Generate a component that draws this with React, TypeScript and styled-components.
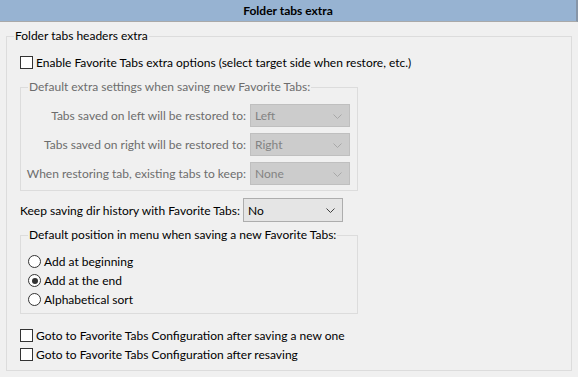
import React from 'react'
import styled, { createGlobalStyle } from 'styled-components'

const GlobalStyle = createGlobalStyle`
	html, body {
		margin: 0;
		padding: 0;
		background: #f0f0f0;
	}
	body {
		font-family: Lato, 'Noto Sans', sans-serif;
		font-size: 12px;
		color: #000;
	}
`

const restoreRows = [
	{ label: 'Tabs saved on left will be restored to:', value: 'Left' },
	{ label: 'Tabs saved on right will be restored to:', value: 'Right' },
	{ label: 'When restoring tab, existing tabs to keep:', value: 'None' },
]

const positions = [
	{ label: 'Add at beginning', checked: false },
	{ label: 'Add at the end', checked: true },
	{ label: 'Alphabetical sort', checked: false },
]

function Chevron({ disabled }: { disabled?: boolean }) {
	return (
		<ChevronBox>
			<svg width='9' height='5' viewBox='0 0 9 5'>
				<polyline points='0.5,0.5 4.5,4.5 8.5,0.5' fill='none' stroke={disabled ? '#a8a8a8' : '#404040'} strokeWidth='1' />
			</svg>
		</ChevronBox>
	)
}

export default function App() {
	return (
		<Main>
			<GlobalStyle />
			<Header>Folder tabs extra</Header>
			<Outer>
				<Legend>Folder tabs headers extra</Legend>
				<CheckRow $top={9}>
					<CheckBox />
					<span>Enable Favorite Tabs extra options (select target side when restore, etc.)</span>
				</CheckRow>
				<Group $disabled $top={7}>
					<Legend $disabled>Default extra settings when saving new Favorite Tabs:</Legend>
					<RestoreGrid>
						{restoreRows.map(row => (
							<React.Fragment key={row.label}>
								<RowLabel>{row.label}</RowLabel>
								<Combo $disabled>
									{row.value}
									<Chevron disabled />
								</Combo>
							</React.Fragment>
						))}
					</RestoreGrid>
				</Group>
				<KeepRow>
					<span>Keep saving dir history with Favorite Tabs:</span>
					<Combo>
						No
						<Chevron />
					</Combo>
				</KeepRow>
				<Group $top={5}>
					<Legend>Default position in menu when saving a new Favorite Tabs:</Legend>
					<RadioList>
						{positions.map(p => (
							<RadioRow key={p.label}>
								<Radio $checked={p.checked} />
								<span>{p.label}</span>
							</RadioRow>
						))}
					</RadioList>
				</Group>
				<BottomChecks>
					<CheckRow>
						<CheckBox />
						<span>Goto to Favorite Tabs Configuration after saving a new one</span>
					</CheckRow>
					<CheckRow>
						<CheckBox />
						<span>Goto to Favorite Tabs Configuration after resaving</span>
					</CheckRow>
				</BottomChecks>
			</Outer>
		</Main>
	)
}

const Main = styled.main`
	width: 578px;
	height: 377px;
	overflow: hidden;
`
const Header = styled.div`
	height: 21px;
	line-height: 21px;
	background: #97b3d2;
	border-bottom: 1px solid #a9a9a9;
	border-right: 2px solid #8796a8;
	text-align: center;
	font-weight: bold;
`
const Outer = styled.fieldset`
	margin: 6px 6px 0 6px;
	padding: 0 0 6px 13px;
	border: 1px solid #dcdcdc;
	height: 343px;
	box-sizing: border-box;
	min-width: 0;
`
const Legend = styled.legend<{ $disabled?: boolean }>`
	padding: 0 1px;
	margin-left: -6px;
	line-height: 16px;
	white-space: nowrap;
	color: ${p => (p.$disabled ? '#6d6d6d' : '#000')};
`
const CheckRow = styled.label<{ $top?: number }>`
	display: flex;
	align-items: center;
	gap: 3px;
	height: 19px;
	margin-top: ${p => p.$top ?? 0}px;
	white-space: nowrap;
`
const CheckBox = styled.span`
	width: 11px;
	height: 11px;
	border: 1px solid #333;
	background: #fff;
	flex: none;
`
const Group = styled.fieldset<{ $disabled?: boolean; $top: number }>`
	margin: ${p => p.$top}px 0 0 0;
	width: 338px;
	box-sizing: border-box;
	border: 1px solid #dcdcdc;
	padding: 0;
	min-width: 0;
	${Legend} {
		margin-left: 7px;
	}
`
const RestoreGrid = styled.div`
	display: grid;
	grid-template-columns: 225px 100px;
	column-gap: 4px;
	row-gap: 6px;
	align-items: center;
	padding: 9px 0 5px 0;
	color: #6d6d6d;
`
const RowLabel = styled.span`
	text-align: right;
	white-space: nowrap;
`
const Combo = styled.div<{ $disabled?: boolean }>`
	position: relative;
	height: 23px;
	box-sizing: border-box;
	display: flex;
	align-items: center;
	padding-left: 4px;
	background: ${p => (p.$disabled ? '#cccccc' : '#e5e5e5')};
	border: 1px solid ${p => (p.$disabled ? '#bfbfbf' : '#adadad')};
	color: ${p => (p.$disabled ? '#838383' : '#000')};
`
const ChevronBox = styled.span`
	position: absolute;
	right: 7px;
	top: 9px;
	display: flex;
`
const KeepRow = styled.div`
	display: flex;
	align-items: center;
	gap: 3px;
	margin-top: 7px;
	white-space: nowrap;
	${Combo} {
		width: 100px;
		height: 24px;
	}
`
const RadioList = styled.div`
	display: flex;
	flex-direction: column;
	padding: 9px 0 4px 7px;
`
const RadioRow = styled.label`
	display: flex;
	align-items: center;
	gap: 3px;
	height: 19px;
`
const Radio = styled.span<{ $checked?: boolean }>`
	position: relative;
	width: 11px;
	height: 11px;
	border: 1px solid #333;
	border-radius: 50%;
	background: #fff;
	flex: none;
	&::after {
		content: '';
		display: ${p => (p.$checked ? 'block' : 'none')};
		position: absolute;
		left: 2.5px;
		top: 2.5px;
		width: 6px;
		height: 6px;
		border-radius: 50%;
		background: #333;
	}
`
const BottomChecks = styled.div`
	display: flex;
	flex-direction: column;
	margin-top: 12px;
`
